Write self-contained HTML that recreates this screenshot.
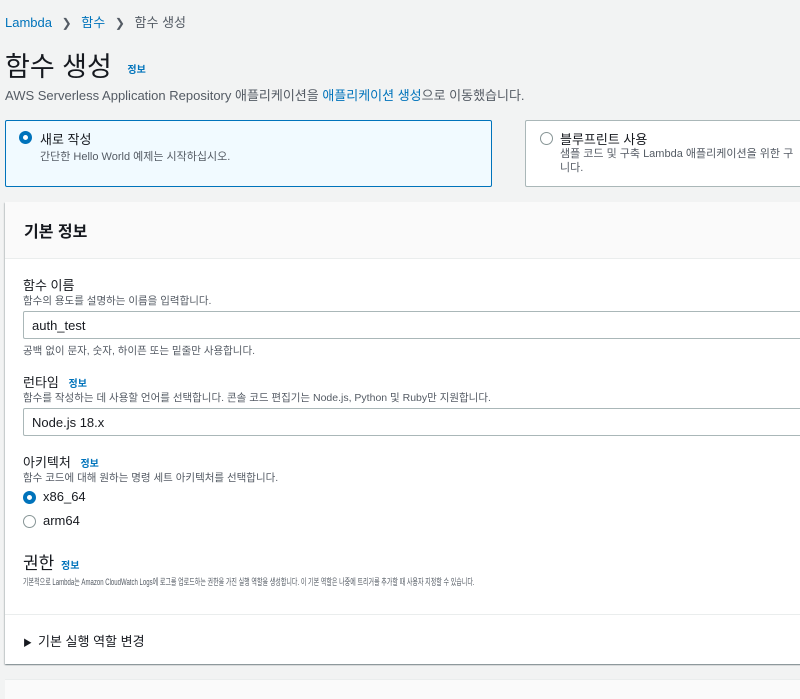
<!DOCTYPE html>
<html><head><meta charset="utf-8"><style>
*{margin:0;padding:0;box-sizing:border-box}
body{width:800px;height:686px;overflow:hidden;background:#f2f3f3;font-family:"Liberation Sans","Noto Sans CJK KR",sans-serif;color:#16191f;position:relative}
.a{position:absolute;white-space:nowrap}
.blue{color:#0073bb}
.g{color:#545b64}
.info{font-size:10px;font-weight:bold;color:#0073bb}
.radio{position:absolute;width:13px;height:13px;border-radius:50%}
.on{border:4px solid #0073bb;background:#fff}
.off{border:1px solid #879596;background:#fff}
.input{position:absolute;left:23px;width:800px;height:28px;border:1px solid #aab7b8;border-radius:2px;background:#fff;font-size:13px;padding:6px 8px}
</style></head><body>
<div class="a" style="left:5px;top:12px;font-size:13px"><span class="blue">Lambda</span> <span class="g" style="margin:0 6px;font-size:12px">&#x276F;</span> <span class="blue">함수</span> <span class="g" style="margin:0 6px;font-size:12px">&#x276F;</span> <span class="g">함수 생성</span></div>
<div class="a" style="left:5px;top:45px;font-size:27px;color:#16191f">함수 생성 <span class="info" style="margin-left:8px;vertical-align:middle">정보</span></div>
<div class="a g" style="left:5px;top:85px;font-size:13px">AWS Serverless Application Repository 애플리케이션을 <span class="blue">애플리케이션 생성</span>으로 이동했습니다.</div>

<div class="a" style="left:5px;top:120px;width:487px;height:67px;background:#f1faff;border:1px solid #0073bb;border-radius:2px"></div>
<div class="radio on" style="left:19px;top:131px"></div>
<div class="a" style="left:40px;top:129px;font-size:13px">새로 작성</div>
<div class="a g" style="left:40px;top:148px;font-size:11px">간단한 Hello World 예제는 시작하십시오.</div>

<div class="a" style="left:525px;top:120px;width:300px;height:67px;background:#fff;border:1px solid #aab7b8;border-radius:2px"></div>
<div class="radio off" style="left:540px;top:132px"></div>
<div class="a" style="left:560px;top:129px;font-size:13px">블루프린트 사용</div>
<div class="a g" style="left:560px;top:147px;font-size:11px;line-height:14px">샘플 코드 및 구축 Lambda 애플리케이션을 위한 구<br>니다.</div>

<div class="a" style="left:5px;top:202px;width:820px;height:462px;background:#fff;box-shadow:0 1px 1px 0 rgba(0,28,36,.3),1px 1px 1px 0 rgba(0,28,36,.15),-1px 1px 1px 0 rgba(0,28,36,.15)"></div>
<div class="a" style="left:5px;top:202px;width:820px;height:57px;background:#fafafa;border-bottom:1px solid #eaeded"></div>
<div class="a" style="left:24px;top:218px;font-size:16px;font-weight:bold">기본 정보</div>

<div class="a" style="left:23px;top:275px;font-size:13px">함수 이름</div>
<div class="a g" style="left:23px;top:293px;font-size:10.5px">함수의 용도를 설명하는 이름을 입력합니다.</div>
<div class="input" style="top:311px">auth_test</div>
<div class="a g" style="left:23px;top:343px;font-size:10.5px">공백 없이 문자, 숫자, 하이픈 또는 밑줄만 사용합니다.</div>

<div class="a" style="left:23px;top:372px;font-size:13px">런타임 <span class="info" style="margin-left:6px">정보</span></div>
<div class="a g" style="left:23px;top:390px;font-size:10.5px">함수를 작성하는 데 사용할 언어를 선택합니다. 콘솔 코드 편집기는 Node.js, Python 및 Ruby만 지원합니다.</div>
<div class="input" style="top:408px">Node.js 18.x</div>

<div class="a" style="left:23px;top:452px;font-size:13px">아키텍처 <span class="info" style="margin-left:6px">정보</span></div>
<div class="a g" style="left:23px;top:470px;font-size:10.5px">함수 코드에 대해 원하는 명령 세트 아키텍처를 선택합니다.</div>
<div class="radio on" style="left:23px;top:491px"></div>
<div class="a" style="left:43px;top:489px;font-size:13px">x86_64</div>
<div class="radio off" style="left:23px;top:515px"></div>
<div class="a" style="left:43px;top:513px;font-size:13px">arm64</div>

<div class="a" style="left:23px;top:549px;font-size:17px">권한 <span class="info" style="margin-left:2px">정보</span></div>
<div class="a g" style="left:23px;top:575px;font-size:9px;transform:scaleX(0.67);transform-origin:0 0">기본적으로 Lambda는 Amazon CloudWatch Logs에 로그를 업로드하는 권한을 가진 실행 역할을 생성합니다. 이 기본 역할은 나중에 트리거를 추가할 때 사용자 지정할 수 있습니다.</div>

<div class="a" style="left:5px;top:614px;width:820px;height:1px;background:#eaeded"></div>
<div class="a" style="left:23px;top:631px;font-size:13px"><span style="font-size:9px;margin-right:6px">&#9654;</span>기본 실행 역할 변경</div>

<div class="a" style="left:5px;top:679px;width:820px;height:20px;background:#fafafa;border-top:1px solid #eaeded"></div>
</body></html>
